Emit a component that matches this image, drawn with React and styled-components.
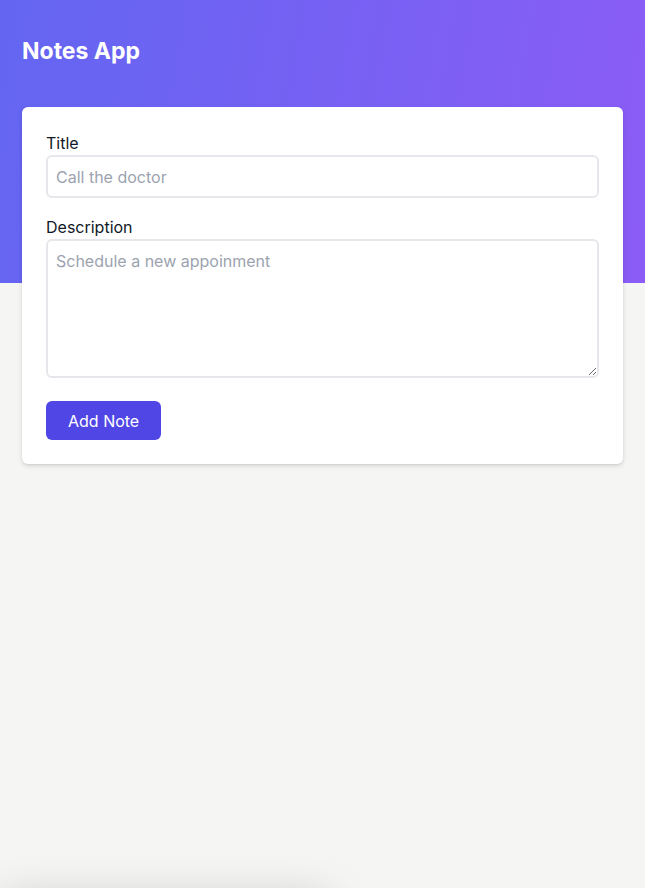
import styled, { createGlobalStyle } from "styled-components";

const GlobalStyle = createGlobalStyle`
  * { box-sizing: border-box; }
  html, body {
    margin: 0;
    background: #f5f5f4;
    font-family: Inter, "Noto Sans", "Liberation Sans", sans-serif;
    color: #111827;
  }
`;

/* ── page ── */
const Page = styled.div`
  min-height: 100vh;
  padding: 0 22px 40px;
  background:
    linear-gradient(100deg, #6366f1 0%, #8b5cf6 100%) top / 100% 283px no-repeat,
    #f5f5f4;
`;

const Heading = styled.h1`
  margin: 0;
  padding: 37px 0 42px;
  font-size: 23px;
  line-height: 28px;
  font-weight: 700;
  color: #fff;
`;

const Card = styled.form`
  background: #fff;
  border-radius: 6px;
  padding: 24px;
  box-shadow: 0 2px 5px rgba(0, 0, 0, 0.12), 0 1px 2px rgba(0, 0, 0, 0.06);
  display: flex;
  flex-direction: column;
`;

const Label = styled.label`
  display: block;
  font-size: 16px;
  line-height: 24px;
  color: #111827;
  margin-top: ${(p) => (p.$first ? "0" : "17px")};
`;

const fieldBase = `
  display: block;
  width: 100%;
  border: 2px solid #e5e7eb;
  border-radius: 6px;
  padding: 8px 8px;
  font-family: Inter, "Noto Sans", "Liberation Sans", sans-serif;
  font-size: 16px;
  line-height: 24px;
  color: #111827;
  background: #fff;
  outline: none;
  &::placeholder { color: #9ca3af; }
`;

const Input = styled.input`
  ${fieldBase}
  height: 43px;
`;

const TextArea = styled.textarea`
  ${fieldBase}
  height: 139px;
  resize: vertical;
`;

const Button = styled.button`
  align-self: flex-start;
  margin-top: 23px;
  height: 39px;
  padding: 0 22px;
  border: none;
  border-radius: 6px;
  background: #4f46e5;
  color: #fff;
  font-family: Inter, "Noto Sans", "Liberation Sans", sans-serif;
  font-size: 16px;
  cursor: pointer;
`;

const Toast = styled.div`
  position: fixed;
  left: 0;
  bottom: -70px;
  width: 330px;
  height: 60px;
  border-radius: 8px;
  background: #fff;
  box-shadow: 0 0 44px rgba(0, 0, 0, 0.18);
`;

export default function App() {
  return (
    <>
      <GlobalStyle />
      <Page>
        <Heading>Notes App</Heading>
        <Card onSubmit={(e) => e.preventDefault()}>
          <Label $first htmlFor="title">Title</Label>
          <Input id="title" placeholder="Call the doctor" />
          <Label htmlFor="desc">Description</Label>
          <TextArea id="desc" placeholder="Schedule a new appoinment" />
          <Button type="submit">Add Note</Button>
        </Card>
      </Page>
      <Toast />
    </>
  );
}
